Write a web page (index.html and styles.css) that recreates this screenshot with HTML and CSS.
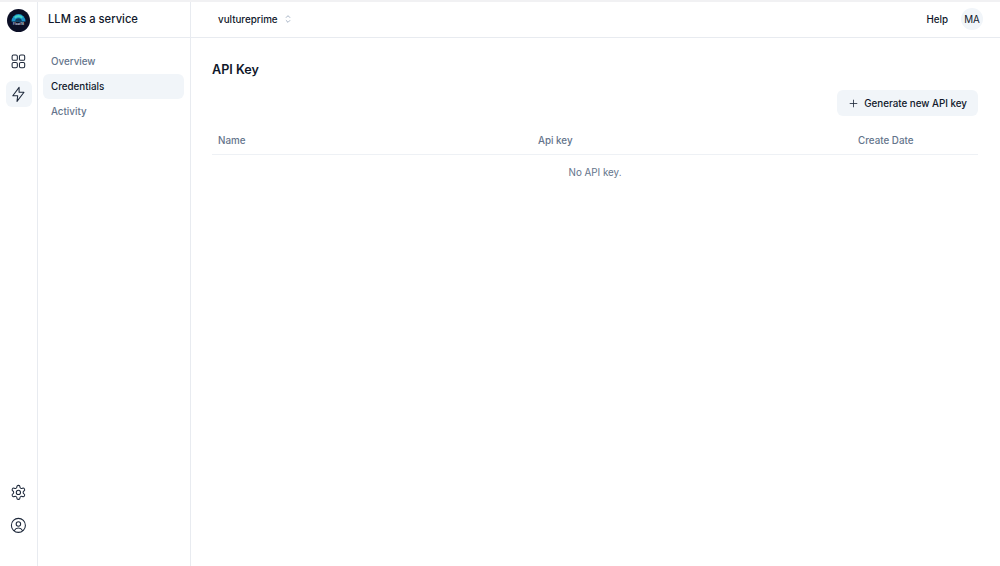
FILE: index.html
```html
<!DOCTYPE html>
<html lang="en">
<head>
    <meta charset="UTF-8">
    <meta name="viewport" content="width=device-width, initial-scale=1.0">
    <title>LLM as a service</title>
    <link rel="stylesheet" href="styles.css">
</head>
<body>
    <div class="app">
        <nav class="rail">
            <div class="logo">
                <svg width="23" height="23" viewBox="0 0 23 23">
                    <circle cx="11.5" cy="11.5" r="11.5" fill="#0b0f26"/>
                    <path d="M4.5 12.5a7 7.5 0 0 1 14 0z" fill="#1b93c9"/>
                    <path d="M7 8a6 6 0 0 1 9 0l-1.6 1.6a4 4 0 0 0-5.8 0z" fill="#45d3c4"/>
                    <path d="M8.2 12.5a3.3 3.3 0 0 1 6.6 0z" fill="#0e3f66"/>
                    <text class="logo-text" x="11.5" y="16.2" text-anchor="middle">Float16</text>
                </svg>
            </div>
            <a class="rail-btn">
                <svg class="icon" viewBox="0 0 24 24">
                    <rect x="3" y="3" width="7.5" height="7.5" rx="2"/>
                    <rect x="13.5" y="3" width="7.5" height="7.5" rx="2"/>
                    <rect x="3" y="13.5" width="7.5" height="7.5" rx="2"/>
                    <rect x="13.5" y="13.5" width="7.5" height="7.5" rx="2"/>
                </svg>
            </a>
            <a class="rail-btn active">
                <svg class="icon" viewBox="0 0 24 24">
                    <path d="M13 2 4 14h7l-1 8 10-13h-7z"/>
                </svg>
            </a>
            <div class="rail-bottom">
                <a class="rail-btn">
                    <svg class="icon" viewBox="0 0 24 24">
                        <path d="M12.2 2h-.4a2 2 0 0 0-2 2v.2a2 2 0 0 1-1 1.7l-.4.3a2 2 0 0 1-2 0l-.2-.1a2 2 0 0 0-2.7.7l-.2.4a2 2 0 0 0 .7 2.7l.2.1a2 2 0 0 1 1 1.7v.5a2 2 0 0 1-1 1.8l-.2.1a2 2 0 0 0-.7 2.7l.2.4a2 2 0 0 0 2.7.7l.2-.1a2 2 0 0 1 2 0l.4.3a2 2 0 0 1 1 1.7v.2a2 2 0 0 0 2 2h.4a2 2 0 0 0 2-2v-.2a2 2 0 0 1 1-1.7l.4-.3a2 2 0 0 1 2 0l.2.1a2 2 0 0 0 2.7-.7l.2-.4a2 2 0 0 0-.7-2.7l-.2-.1a2 2 0 0 1-1-1.8v-.5a2 2 0 0 1 1-1.7l.2-.1a2 2 0 0 0 .7-2.7l-.2-.4a2 2 0 0 0-2.7-.7l-.2.1a2 2 0 0 1-2 0l-.4-.3a2 2 0 0 1-1-1.7V4a2 2 0 0 0-2-2z"/>
                        <circle cx="12" cy="12" r="3"/>
                    </svg>
                </a>
                <a class="rail-btn">
                    <svg class="icon" viewBox="0 0 24 24">
                        <circle cx="12" cy="12" r="10"/>
                        <circle cx="12" cy="10" r="3.2"/>
                        <path d="M6.2 19.2a6.5 6.5 0 0 1 11.6 0"/>
                    </svg>
                </a>
            </div>
        </nav>

        <aside class="sidebar">
            <div class="sidebar-title">LLM as a service</div>
            <ul class="side-menu">
                <li>Overview</li>
                <li class="active">Credentials</li>
                <li>Activity</li>
            </ul>
        </aside>

        <div class="main">
            <header class="topbar">
                <div class="team">
                    <span>vultureprime</span>
                    <svg class="chevrons" viewBox="0 0 24 24">
                        <path d="m7 9 5-5 5 5"/>
                        <path d="m7 15 5 5 5-5"/>
                    </svg>
                </div>
                <div class="topbar-right">
                    <span class="help">Help</span>
                    <span class="avatar">MA</span>
                </div>
            </header>

            <main class="content">
                <h1>API Key</h1>
                <div class="actions">
                    <button type="button" class="btn">
                        <svg class="plus" viewBox="0 0 24 24">
                            <path d="M12 3v18"/>
                            <path d="M3 12h18"/>
                        </svg>
                        Generate new API key
                    </button>
                </div>
                <table>
                    <thead>
                        <tr>
                            <th>Name</th>
                            <th>Api key</th>
                            <th>Create Date</th>
                        </tr>
                    </thead>
                    <tbody>
                        <tr>
                            <td colspan="3">No API key.</td>
                        </tr>
                    </tbody>
                </table>
            </main>
        </div>
    </div>
</body>
</html>
```

FILE: styles.css
```css
* {
    box-sizing: border-box;
}

html, body {
    height: 100%;
}

body {
    margin: 0;
    font-family: Inter, "Liberation Sans", sans-serif;
    font-size: 9.8px;
    color: #0f172a;
    background-color: #fff;
    overflow: hidden;
}

.app {
    display: flex;
    height: 100vh;
    border-top: 2px solid #f1f1f3;
}

/* icon rail */
.rail {
    width: 38px;
    flex-shrink: 0;
    display: flex;
    flex-direction: column;
    align-items: center;
    border-right: 1px solid #e8ebf0;
    padding-top: 7px;
    padding-bottom: 21px;
}

.logo {
    width: 23px;
    height: 23px;
    margin-bottom: 16px;
}

.logo-text {
    font-family: Inter, "Liberation Sans", sans-serif;
    font-size: 3.2px;
    font-weight: 600;
    fill: #d5deea;
}

.rail-btn {
    width: 26px;
    height: 26px;
    margin-bottom: 7px;
    display: flex;
    align-items: center;
    justify-content: center;
    border-radius: 6px;
}

.rail-btn.active {
    background-color: #f1f5f9;
}

.icon {
    width: 16.8px;
    height: 16.8px;
    fill: none;
    stroke: #1e293b;
    stroke-width: 1.5;
    stroke-linecap: round;
    stroke-linejoin: round;
}

.rail-bottom {
    margin-top: auto;
}

/* second sidebar */
.sidebar {
    width: 153px;
    flex-shrink: 0;
    border-right: 1px solid #e8ebf0;
}

.sidebar-title {
    height: 36px;
    display: flex;
    align-items: center;
    padding-left: 10px;
    padding-bottom: 1px;
    font-size: 11.2px;
    font-weight: 500;
    border-bottom: 1px solid #e8ebf0;
}

.side-menu {
    list-style: none;
    margin: 0;
    padding: 11px 6px 0 5px;
}

.side-menu li {
    height: 25px;
    display: flex;
    align-items: center;
    padding-left: 8px;
    font-weight: 500;
    color: #64748b;
    border-radius: 6px;
}

.side-menu li.active {
    color: #0f172a;
    background-color: #f1f5f9;
}

/* main area */
.main {
    flex: 1;
    min-width: 0;
}

.topbar {
    height: 36px;
    display: flex;
    align-items: center;
    justify-content: space-between;
    padding: 0 17px 1px 27px;
    border-bottom: 1px solid #e8ebf0;
}

.team {
    display: flex;
    align-items: center;
    gap: 5px;
    font-weight: 500;
}

.chevrons {
    width: 10px;
    height: 10px;
    fill: none;
    stroke: #94a3b8;
    stroke-width: 2;
}

.topbar-right {
    display: flex;
    align-items: center;
    gap: 13px;
}

.help {
    font-weight: 500;
}

.avatar {
    width: 22px;
    height: 22px;
    display: flex;
    align-items: center;
    justify-content: center;
    border-radius: 50%;
    background-color: #f1f5f9;
}

.content {
    padding: 24px 22px 0 21px;
}

h1 {
    margin: 0;
    font-size: 12.6px;
    font-weight: 600;
    line-height: 16px;
}

.actions {
    display: flex;
    justify-content: flex-end;
    margin-top: 12px;
}

.btn {
    height: 26px;
    display: flex;
    align-items: center;
    gap: 6px;
    padding: 0 11px 0 12px;
    border: none;
    border-radius: 6px;
    background-color: #f1f5f9;
    color: #0f172a;
    font-family: inherit;
    font-size: 9.8px;
    font-weight: 500;
}

.plus {
    width: 9px;
    height: 9px;
    fill: none;
    stroke: #1e293b;
    stroke-width: 2.2;
    stroke-linecap: round;
}

table {
    width: 100%;
    margin-top: 10px;
    border-collapse: collapse;
    table-layout: fixed;
}

th {
    height: 28px;
    padding: 2px 6px 0;
    text-align: left;
    font-weight: 500;
    color: #64748b;
    border-bottom: 1px solid #eef1f5;
}

th:nth-child(1), th:nth-child(2) {
    width: 320px;
}

td {
    height: 36px;
    padding: 0 6px;
    text-align: center;
    color: #64748b;
}
```
